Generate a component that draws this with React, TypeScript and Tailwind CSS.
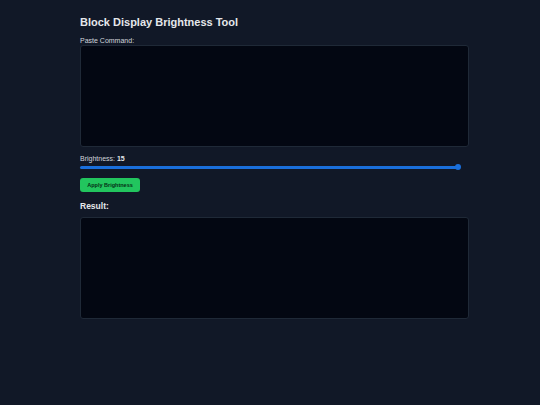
export default function App() {
  return (
    <div className="min-h-[405px] w-full bg-[#111827] font-['Liberation_Sans',Arial,sans-serif] text-[#e5e7eb]">
      <div className="ml-[80px] w-[389px] pt-[15px]">
        <h1 className="text-[11px] font-bold leading-[14px] text-[#e5e7eb]">Block Display Brightness Tool</h1>

        <label className="mt-[7px] block text-[7px] leading-[9px] text-[#d1d5db]">Paste Command:</label>
        <textarea className="block h-[102px] w-full resize-none rounded-[3px] border border-[#1f2937] bg-[#030712] outline-none" />

        <div className="mt-[7px] text-[7px] leading-[9px] text-[#d1d5db]">
          Brightness: <span className="font-bold text-[#e5e7eb]">15</span>
        </div>
        <div className="relative mt-[1px] h-[6px] w-[381px]">
          <div className="absolute left-0 right-[2px] top-[1.5px] h-[3px] rounded-full bg-[#1a6fdb]" />
          <div className="absolute right-0 top-0 h-[6px] w-[6px] rounded-full bg-[#1a6fdb]" />
        </div>

        <button className="mt-[8px] flex h-[14px] w-[60px] items-center justify-center rounded-[3px] bg-[#22c55e] text-[5.5px] font-bold text-[#052e16]">
          Apply Brightness
        </button>

        <h2 className="mt-[9px] text-[8.5px] font-bold leading-[11px] text-[#e5e7eb]">Result:</h2>
        <textarea className="mt-[5px] block h-[102px] w-full resize-none rounded-[3px] border border-[#1f2937] bg-[#030712] outline-none" />
      </div>
    </div>
  )
}
